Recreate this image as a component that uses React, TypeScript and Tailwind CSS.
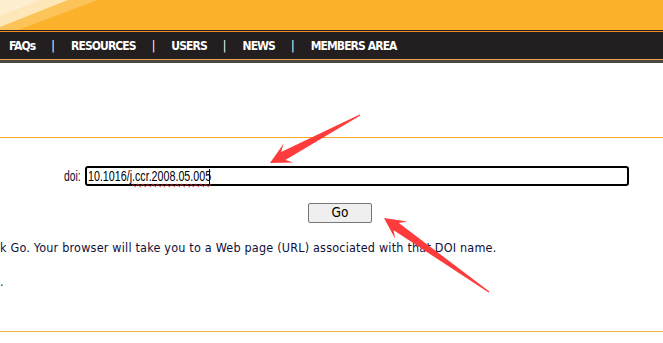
import React from 'react';

// builds a tapered "screenshot markup" arrow from tail to tip
function arrowPoints(tx: number, ty: number, hx: number, hy: number) {
  const dx = hx - tx;
  const dy = hy - ty;
  const len = Math.hypot(dx, dy);
  const ux = dx / len;
  const uy = dy / len;
  const nx = -uy;
  const ny = ux;
  const at = (d: number, w: number) => `${tx + ux * d + nx * w},${ty + uy * d + ny * w}`;
  return [
    at(0, 0.6),
    at(len - 15, 4.5),
    at(len - 21, 10.5),
    at(len, 0),
    at(len - 21, -10.5),
    at(len - 15, -4.5),
    at(0, -0.6),
  ].join(' ');
}

const navItems = ['FAQs', 'RESOURCES', 'USERS', 'NEWS', 'MEMBERS AREA'];

export default function App() {
  return (
    <div className="relative w-[663px] h-[343px] overflow-hidden bg-white">
      {/* ===== header ===== */}
      <div className="relative h-[30px] bg-[#fbb12a]">
        <svg className="absolute left-0 top-0" width="120" height="30" viewBox="0 0 120 30">
          <polygon points="0,0 98,0 18,30 0,30" fill="#fcc358" />
          <polygon points="0,0 68,0 0,27" fill="#fde6b8" />
          <polygon points="0,0 40,0 0,16" fill="#fdeed0" />
        </svg>
      </div>
      <div className="h-px bg-[#231f20]" />
      <div className="h-px bg-[#f28c1e]" />
      <nav className="flex h-[27px] items-center bg-[#231f20] pl-[9px] font-['DejaVu_Sans_Condensed',sans-serif] text-[12px] font-bold text-white">
        {navItems.map((item, i) => (
          <React.Fragment key={item}>
            {i > 0 && <span className="mx-[16px] font-normal">|</span>}
            <span className="tracking-[-0.9px]">{item}</span>
          </React.Fragment>
        ))}
      </nav>
      <div className="h-px bg-[#e8a54a]" />
      <div className="h-[3px] bg-[#4b4742]" />

      {/* ===== body ===== */}
      <div className="mt-[74px] h-px bg-[#f3a92c]" />

      <div className="mt-[28px] flex h-[20px] items-center pl-[64px] font-['Liberation_Sans',Arial,sans-serif] leading-[16px]">
        <span className="mr-[5px] w-[16px] whitespace-nowrap text-[15px] text-[#0d0d2b]">
          <span className="inline-block origin-left scale-x-[0.69]">doi:</span>
        </span>
        <div className="flex h-[20px] w-[544px] items-center rounded-[3px] border-2 border-black px-[1px] text-[15.5px] text-black">
          <span className="inline-block w-[121px] whitespace-nowrap">
            <span className="inline-block origin-left scale-x-[0.69]">
              10.1016/
              <span className="underline decoration-wavy decoration-[#e33] decoration-1 underline-offset-[2px]">j.ccr.2008.05.005</span>
            </span>
          </span>
          <span className="h-[15px] w-px bg-black" />
        </div>
      </div>

      <div className="mt-[13px] pl-[308px]">
        <button className="h-[20px] w-[64px] rounded-[2px] border border-[#767676] bg-[#efefef] font-['DejaVu_Sans_Condensed',sans-serif] text-[13.5px] leading-none text-black">
          Go
        </button>
      </div>

      <div className="mt-[18px] font-['DejaVu_Sans_Condensed',sans-serif] text-[12.5px] leading-[14px] tracking-[0.2px] text-[#10103a]">
        <p>k Go. Your browser will take you to a Web page (URL) associated with that DOI name.</p>
        <p className="mt-[20px]">.</p>
      </div>

      <div className="mt-[42px] h-px bg-[#eeb44a]" />

      {/* ===== markup arrows ===== */}
      <svg className="pointer-events-none absolute inset-0" width="663" height="343">
        <polygon points={arrowPoints(360, 115, 270, 163)} fill="#ff3b3b" />
        <polygon points={arrowPoints(489, 292, 384, 218)} fill="#ff3b3b" />
      </svg>
    </div>
  );
}
